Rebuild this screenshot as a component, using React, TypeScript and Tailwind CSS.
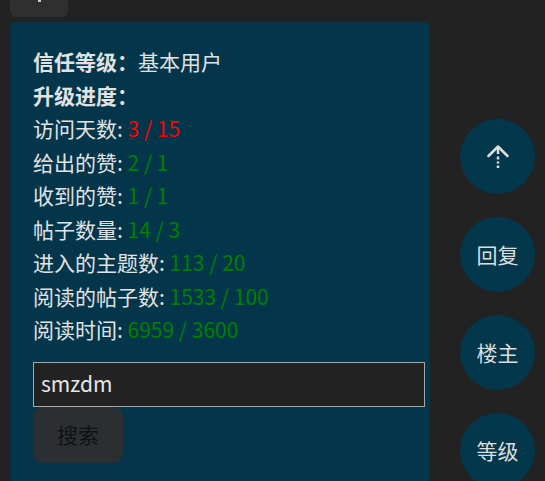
import React from "react";

const font = { fontFamily: '"Noto Sans CJK SC", "Noto Sans", sans-serif' };

function Row({ label, value, color }: { label: string; value: string; color: string }) {
  return (
    <div className="leading-[33.5px]">
      {label}: <span className={color}>{value}</span>
    </div>
  );
}

function Circle({ children }: { children: React.ReactNode }) {
  return (
    <div className="w-[75px] h-[75px] rounded-full bg-[#03374b] flex items-center justify-center text-[21px] text-[#dddddd]">
      {children}
    </div>
  );
}

export default function App() {
  return (
    <div className="w-[545px] h-[481px] bg-[#222222] overflow-hidden relative" style={font}>
      <div className="ml-[10px] w-[58px] h-[17px] bg-[#2f2f2f] rounded-b-[6px] relative">
        <div className="absolute left-[28px] top-0 w-[3px] h-[2px] bg-[#cccccc]" />
      </div>
      <div className="flex">
        <div className="ml-[10px] mt-[5px] w-[420px] h-[470px] bg-[#03364a] rounded-[6px] pt-[23px] pl-[23px] text-[21px] text-[#e2e2e2]">
          <div className="leading-[33.5px]">
            <span className="font-bold">信任等级：</span>基本用户
          </div>
          <div className="leading-[33.5px] font-bold">升级进度：</div>
          <Row label="访问天数" value="3 / 15" color="text-[#ff0000]" />
          <Row label="给出的赞" value="2 / 1" color="text-[#008000]" />
          <Row label="收到的赞" value="1 / 1" color="text-[#008000]" />
          <Row label="帖子数量" value="14 / 3" color="text-[#008000]" />
          <Row label="进入的主题数" value="113 / 20" color="text-[#008000]" />
          <Row label="阅读的帖子数" value="1533 / 100" color="text-[#008000]" />
          <Row label="阅读时间" value="6959 / 3600" color="text-[#008000]" />
          <div className="mt-[15px] w-[392px] h-[45px] border border-[#a8a8a8] bg-[#222222] flex items-center pl-[7px] text-[21px] text-[#e6e6e6]">
            smzdm
          </div>
          <div className="w-[90px] h-[56px] rounded-[10px] bg-[#2b2f32] flex items-center justify-center text-[21px] text-[#111111]">
            搜索
          </div>
        </div>
        <div className="ml-[30px] mt-[102px] flex flex-col gap-[23px]">
          <Circle>
            <svg width="22" height="24" viewBox="0 0 22 24" fill="none" stroke="#dddddd" strokeWidth="2.5">
              <polyline points="1.5,11 11,1.5 20.5,11" strokeLinecap="round" strokeLinejoin="round" />
              <line x1="11" y1="2" x2="11" y2="9" />
              <line x1="11" y1="11.5" x2="11" y2="14.5" />
              <line x1="11" y1="16.5" x2="11" y2="18.5" />
              <line x1="11" y1="20.5" x2="11" y2="23" />
            </svg>
          </Circle>
          <Circle>回复</Circle>
          <Circle>楼主</Circle>
          <Circle>等级</Circle>
        </div>
      </div>
    </div>
  );
}
